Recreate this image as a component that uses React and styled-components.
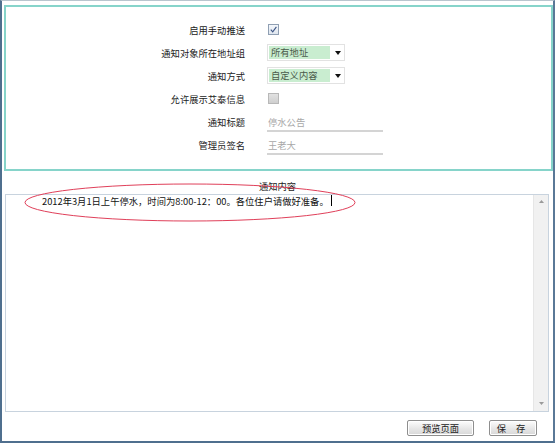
import React from "react";
import styled, { createGlobalStyle } from "styled-components";

const Global = createGlobalStyle`
  html, body { margin: 0; padding: 0; background: #fff; }
  body { font-family: "Noto Sans CJK SC", "Noto Sans", sans-serif; }
  * { box-sizing: border-box; }
`;

const Frame = styled.div`
  width: 555px;
  height: 443px;
  border-left: 2px solid #4f6f8e;
  border-right: 2px solid #5a7897;
  border-bottom: 2px solid #4f6f8e;
  border-top: 1px solid #b9c5ce;
  padding-top: 4px;
  display: flex;
  flex-direction: column;
  font-size: 9.3px;
  color: #222;
`;

const Panel = styled.div`
  margin-left: 2px;
  height: 166px;
  border: 2px solid #86d4ca;
  padding-top: 11px;
`;

const Form = styled.div`
  display: grid;
  grid-template-columns: 239px 1fr;
  column-gap: 22px;
  grid-auto-rows: 23px;
  align-items: center;
`;

const Label = styled.div`
  text-align: right;
  color: #222;
  line-height: 12px;
`;

const Cell = styled.div`
  display: flex;
  align-items: center;
  height: 23px;
`;

const Check = styled.span`
  width: 11px;
  height: 11px;
  margin-left: 1px;
  border: 1px solid ${(p) => (p.$disabled ? "#b8b8b8" : "#8f9fb3")};
  background: ${(p) =>
    p.$disabled
      ? "linear-gradient(#e2e2e2, #cfcfcf)"
      : "linear-gradient(#f4f7fb, #dfe6ef)"};
  display: flex;
  align-items: center;
  justify-content: center;
`;

const Select = styled.div`
  width: 78px;
  height: 17px;
  border: 1px solid #e2e2e2;
  display: flex;
  align-items: center;
  padding: 1px;
`;

const SelectValue = styled.div`
  width: 61px;
  height: 13px;
  background: #c9edd0;
  color: #4a5a4a;
  line-height: 13px;
  padding-left: 2px;
`;

const Arrow = styled.div`
  flex: 1;
  display: flex;
  justify-content: center;
  padding-left: 3px;
`;

const TextInput = styled.div`
  width: 116px;
  height: 17px;
  margin-top: 4px;
  border-bottom: 2px solid #d4d4d4;
  color: #a8a8a8;
  line-height: 14px;
  padding-left: 1px;
`;

const Content = styled.div`
  position: relative;
  display: flex;
  flex-direction: column;
`;

const ContentTitle = styled.div`
  height: 23px;
  text-align: center;
  line-height: 22px;
  padding-top: 4px;
  color: #222;
`;

const Area = styled.div`
  margin-left: 3px;
  margin-right: 4px;
  height: 218px;
  border: 1px solid #c8d3de;
  display: flex;
`;

const AreaText = styled.div`
  flex: 1;
  padding: 0 0 0 36px;
  color: #111;
  line-height: 12px;
`;

const Caret = styled.span`
  display: inline-block;
  width: 1px;
  height: 11px;
  background: #000;
  margin-left: 2px;
  vertical-align: -1px;
`;

const Scroll = styled.div`
  width: 15px;
  background: #f1f1f1;
  border-left: 1px solid #e6e6e6;
  display: flex;
  flex-direction: column;
  justify-content: space-between;
  align-items: center;
  padding: 5px 0 6px;
`;

const Ellipse = styled.svg`
  position: absolute;
  left: 0;
  top: 0;
  pointer-events: none;
`;

const Buttons = styled.div`
  display: flex;
  justify-content: flex-end;
  gap: 15px;
  padding: 8px 16px 0 0;
`;

const Button = styled.div`
  width: ${(p) => p.$w}px;
  height: 16px;
  border: 1px solid #8e8e8e;
  border-radius: 2px;
  background: linear-gradient(#fdfdfd, #e6e6e6 55%, #d8d8d8);
  box-shadow: inset 0 0 0 1px #fff;
  text-align: center;
  line-height: 14px;
  color: #222;
  letter-spacing: ${(p) => (p.$spaced ? "4px" : "0")};
`;

const Tick = () => (
  <svg width="9" height="9" viewBox="0 0 9 9">
    <path d="M1.8 4.6 L3.7 6.8 L7.4 1.8" stroke="#3d5585" strokeWidth="1.1" fill="none" />
  </svg>
);

const Down = () => (
  <svg width="6" height="4" viewBox="0 0 6 4">
    <path d="M0 0 H6 L3 4 Z" fill="#111" />
  </svg>
);

const rows = [
  { label: "启用手动推送", type: "check" },
  { label: "通知对象所在地址组", type: "select", value: "所有地址" },
  { label: "通知方式", type: "select", value: "自定义内容" },
  { label: "允许展示艾泰信息", type: "disabled" },
  { label: "通知标题", type: "input", value: "停水公告" },
  { label: "管理员签名", type: "input", value: "王老大" },
];

function Control({ row }) {
  if (row.type === "check")
    return (
      <Cell>
        <Check>
          <Tick />
        </Check>
      </Cell>
    );
  if (row.type === "disabled")
    return (
      <Cell>
        <Check $disabled />
      </Cell>
    );
  if (row.type === "select")
    return (
      <Cell>
        <Select>
          <SelectValue>{row.value}</SelectValue>
          <Arrow>
            <Down />
          </Arrow>
        </Select>
      </Cell>
    );
  return (
    <Cell>
      <TextInput>{row.value}</TextInput>
    </Cell>
  );
}

export default function App() {
  return (
    <>
      <Global />
      <Frame>
        <Panel>
          <Form>
            {rows.map((r) => (
              <React.Fragment key={r.label}>
                <Label>{r.label}</Label>
                <Control row={r} />
              </React.Fragment>
            ))}
          </Form>
        </Panel>
        <Content>
          <ContentTitle>通知内容</ContentTitle>
          <Area>
            <AreaText>
              2012年3月1日上午停水，时间为8:00-12：00。各位住户请做好准备。
              <Caret />
            </AreaText>
            <Scroll>
              <svg width="5" height="3" viewBox="0 0 5 3">
                <path d="M0 3 L2.5 0 L5 3 Z" fill="#9a9a9a" />
              </svg>
              <svg width="5" height="3" viewBox="0 0 5 3">
                <path d="M0 0 L2.5 3 L5 0 Z" fill="#9a9a9a" />
              </svg>
            </Scroll>
          </Area>
          <Ellipse width="400" height="60">
            <ellipse cx="188" cy="31.5" rx="165" ry="18.5" fill="none" stroke="#e0405a" strokeWidth="1" />
          </Ellipse>
        </Content>
        <Buttons>
          <Button $w={67}>预览页面</Button>
          <Button $w={48} $spaced>
            保 存
          </Button>
        </Buttons>
      </Frame>
    </>
  );
}
